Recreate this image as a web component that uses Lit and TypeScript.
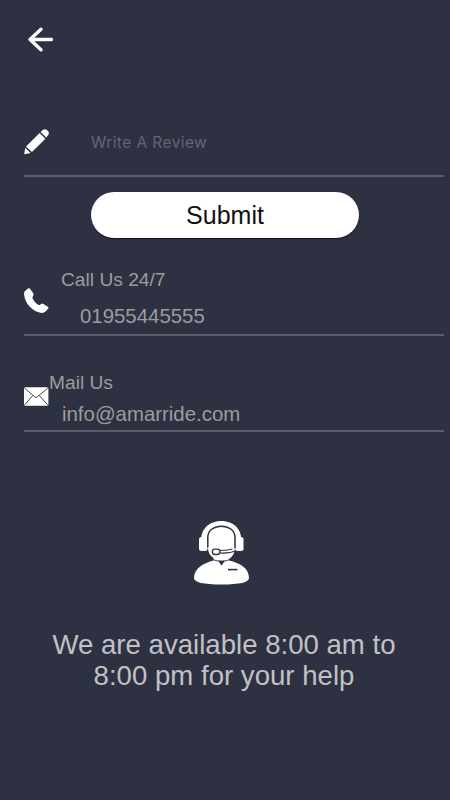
import { LitElement, html, css, svg } from "lit";
import { customElement, property } from "lit/decorators.js";

const icons = {
  pencil: svg`<path d="M.2 25.3 1.2 18.8 6.6 23.9Z M2 17.4 15.6 4 21.4 9.7 7.9 23Z M16.6 3.1 18.8 1Q21.1-.6 23.5 1.6 25.8 3.9 24.2 6L22.2 8.5Z"/>`,
  phone: svg`<path d="M5.1.2Q4.5 0 3.9.5L.6 3.5Q0 4.3.1 6.5C1.1 16 8.4 23.8 18 24.9Q20 25 21 24.1L24.3 20.6Q24.8 19.6 23.9 18.8L19 15.7Q18.1 15.2 17.2 15.9L15.2 17.3C12.1 15.7 9.6 13 8.3 9.7L9.4 7.2Q9.8 6.2 9.2 5.3L6 .8Q5.6.3 5.1.2Z"/>`,
  mail: svg`<rect x="0" y="3.3" width="24.4" height="18.5" rx="1.5"/><path d="M.7 4.3 12 13.8 23.7 4.3M.7 20.9 8.8 11.4M23.7 20.9 15.2 11.4" fill="none" stroke="#454657" stroke-width="1"/>`,
};

@customElement("contact-row")
export class ContactRow extends LitElement {
  @property() icon: keyof typeof icons = "pencil";

  static styles = css`
    :host {
      display: flex;
      box-sizing: border-box;
      border-bottom: 2px solid #5b5d6d;
    }
    .icon {
      flex: none;
      width: 25px;
      height: 26px;
      fill: #fff;
      margin-top: var(--icon-top, 0);
    }
    .body {
      display: flex;
      flex-direction: column;
      align-items: flex-start;
      white-space: nowrap;
    }
  `;

  render() {
    return html`<svg class="icon" viewBox="0 0 25 26">${icons[this.icon]}</svg>
      <div class="body"><slot></slot></div>`;
  }
}

@customElement("app-root")
export class AppRoot extends LitElement {
  static styles = css`
    :host {
      display: flex;
      flex-direction: column;
      box-sizing: border-box;
      height: 800px;
      padding: 26px 6px 0 24px;
      overflow: hidden;
      background: #2e3142;
      color: #9c9c9f;
      font-family: "Liberation Sans", Arial, sans-serif;
    }
    .back {
      display: block;
      width: 34px;
      height: 28px;
      fill: none;
      stroke: #fff;
      stroke-width: 3.3;
      stroke-linecap: round;
      stroke-linejoin: round;
    }
    .review {
      height: 48px;
      margin-top: 75px;
    }
    .placeholder {
      margin: 4px 0 0 42px;
      font: 15.5px/20px Inter, Roboto, sans-serif;
      letter-spacing: 0.42px;
      color: #646570;
    }
    .submit {
      align-self: flex-start;
      width: 268px;
      height: 46px;
      margin: 15px 0 0 67px;
      padding: 0;
      border: 0;
      border-radius: 23px;
      background: #fff;
      box-shadow: 0 1px 1px #111321;
      color: #111;
      font: 25px/44px "Liberation Sans", Arial, sans-serif;
    }
    .phone {
      --icon-top: 19px;
      height: 67px;
      margin-top: 31px;
    }
    .mail {
      --icon-top: 14px;
      height: 62px;
      margin-top: 34px;
    }
    .label {
      font-size: 19.2px;
      line-height: 24px;
    }
    .value {
      font-size: 20.4px;
      line-height: 24px;
    }
    .phone .label {
      margin: -1px 0 0 12px;
    }
    .phone .value {
      margin: 12px 0 0 31px;
    }
    .mail .label {
      margin-top: 1px;
    }
    .mail .value {
      margin: 7px 0 0 13px;
    }
    .agent {
      display: block;
      width: 56px;
      height: 66px;
      margin: 88px 0 0 170px;
    }
    .hours {
      width: 400px;
      margin: 43px 0 0;
      text-align: center;
      font-size: 27.6px;
      line-height: 31px;
      color: #c1c1c4;
    }
  `;

  render() {
    return html`
      <svg class="back" viewBox="0 0 34 28">
        <path d="M27.5 13.5H6M17 3.2 6 13.5 17 23.8" />
      </svg>
      <contact-row class="review" icon="pencil">
        <span class="placeholder">Write A Review</span>
      </contact-row>
      <button class="submit">Submit</button>
      <contact-row class="phone" icon="phone">
        <span class="label">Call Us 24/7</span>
        <span class="value">01955445555</span>
      </contact-row>
      <contact-row class="mail" icon="mail">
        <span class="label">Mail Us</span>
        <span class="value">info@amarride.com</span>
      </contact-row>
      <svg class="agent" viewBox="0 0 56 66" fill="#fff">
        <path d="M7.3 20C6.5-5.5 48-5.5 47.3 20L41 28Q41 35 35 39V40.5C46 43 55 48 55 58Q55 64.5 27.7 64.5 0 64.5 0 58C0 48 10 43 19.5 40.5V38Q14 34 14 28Z" />
        <rect x="5" y="17" width="8.5" height="14" rx="2.5" />
        <rect x="41" y="17" width="8.5" height="14" rx="2.5" />
        <path d="M13.8 27.5V17.5C13.5 2.4 41.2 2.4 41 17.5V28.5" fill="none" stroke="#2e3142" stroke-width="1.5" />
        <path d="M41.5 30.8Q36 33.5 26 33" fill="none" stroke="#2e3142" stroke-width="1.2" />
        <rect x="18.3" y="29.1" width="7.7" height="5.4" rx="2.7" stroke="#2e3142" stroke-width="1.3" />
        <path d="M25.8 30.5Q34 30.5 38.5 29" fill="none" stroke="#2e3142" stroke-width="1" />
        <path d="M18.5 39.5Q27.5 43 36 39.5" fill="none" stroke="#2e3142" stroke-width=".9" />
        <path d="M24 40.7H31L27.5 45.4Z" fill="#2e3142" />
        <path d="M34 49.6H43.5" stroke="#2e3142" stroke-width="1.6" />
      </svg>
      <p class="hours">We are available 8:00 am to<br />8:00 pm for your help</p>
    `;
  }
}
